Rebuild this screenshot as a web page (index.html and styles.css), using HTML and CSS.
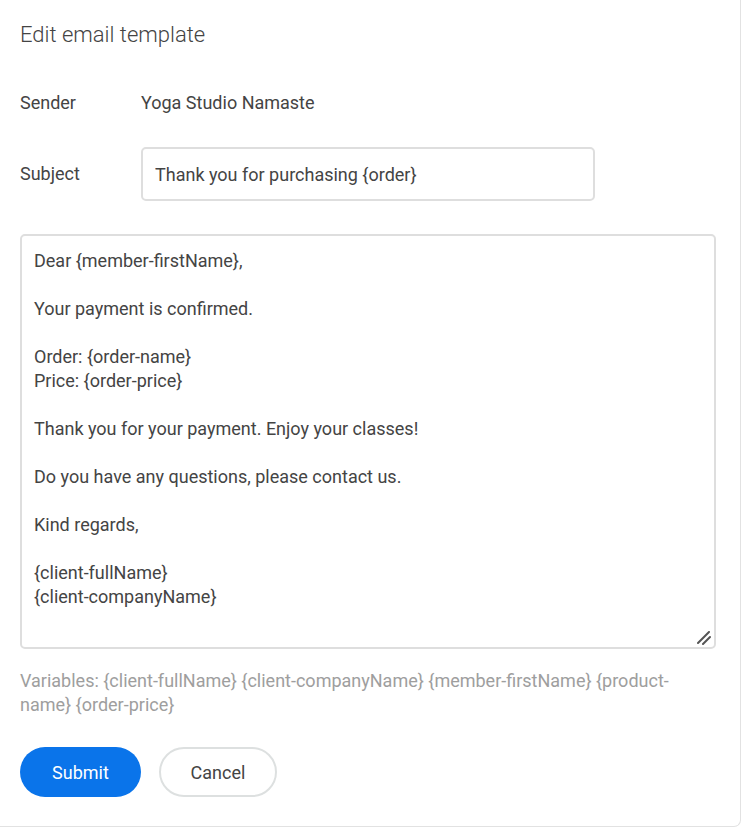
FILE: index.html
```html
<!DOCTYPE html>
<html>
<head>
    <meta charset="UTF-8">
    <title>Edit email template</title>
    <link rel="stylesheet" href="styles.css">
</head>
<body>
<div class="card">
    <h2 class="title">Edit email template</h2>

    <div class="row sender-row">
        <div class="label">Sender</div>
        <div class="value">Yoga Studio Namaste</div>
    </div>

    <div class="row subject-row">
        <label class="label" for="subject">Subject</label>
        <input id="subject" class="subject-input" type="text" value="Thank you for purchasing {order}">
    </div>

    <div class="body-wrap">
        <textarea class="body-input">Dear {member-firstName},

Your payment is confirmed.

Order: {order-name}
Price: {order-price}

Thank you for your payment. Enjoy your classes!

Do you have any questions, please contact us.

Kind regards,

{client-fullName}
{client-companyName}</textarea>
        <svg class="grip" width="14" height="14" viewBox="0 0 14 14">
            <path d="M1 12 L12 1 M6 13 L13 6" stroke="#555" stroke-width="2" stroke-linecap="round" fill="none"/>
        </svg>
    </div>

    <p class="variables">Variables: {client-fullName} {client-companyName} {member-firstName} {product-name} {order-price}</p>

    <div class="actions">
        <button class="btn btn-primary">Submit</button>
        <button class="btn btn-secondary">Cancel</button>
    </div>
</div>
</body>
</html>
```

FILE: styles.css
```css
body {
    margin: 0;
    font-family: Roboto, "Liberation Sans", Arial, sans-serif;
    background-color: #fff;
    color: #444;
}
.card {
    box-sizing: border-box;
    width: 741px;
    height: 827px;
    padding: 20px 0 0 20px;
    background: white;
    border-right: 1px solid #e2e2e2;
    border-bottom: 1px solid #e2e2e2;
    border-bottom-right-radius: 7px;
}
.title {
    margin: 0 0 41px;
    font-size: 22px;
    font-weight: 300;
    line-height: 30px;
    color: #444;
}
.row {
    display: flex;
    align-items: center;
}
.label {
    width: 121px;
    font-size: 18px;
    line-height: 24px;
}
.value {
    font-size: 18px;
    line-height: 24px;
}
.sender-row {
    margin-bottom: 32px;
}
.subject-row {
    margin-bottom: 33px;
}
.subject-input {
    box-sizing: border-box;
    width: 454px;
    height: 54px;
    padding: 0 12px;
    border: 2px solid #dedede;
    border-radius: 5px;
    font-family: inherit;
    font-size: 18px;
    color: #444;
    outline: none;
}
.body-wrap {
    position: relative;
    width: 696px;
}
.body-input {
    display: block;
    box-sizing: border-box;
    width: 696px;
    height: 415px;
    margin: 0;
    padding: 13px 12px;
    border: 2px solid #dedede;
    border-radius: 5px;
    font-family: inherit;
    font-size: 18px;
    line-height: 24px;
    color: #444;
    outline: none;
    resize: none;
}
.grip {
    position: absolute;
    right: 5px;
    bottom: 4px;
}
.variables {
    width: 696px;
    margin: 20px 0 30px;
    font-size: 18px;
    line-height: 24px;
    color: #9e9e9e;
}
.actions {
    display: flex;
    gap: 18px;
}
.btn {
    box-sizing: border-box;
    height: 50px;
    border-radius: 25px;
    font-family: inherit;
    font-size: 18px;
    cursor: pointer;
}
.btn-primary {
    width: 121px;
    background-color: #0a74ea;
    border: none;
    color: white;
}
.btn-secondary {
    width: 118px;
    background-color: white;
    border: 2px solid #dde0e0;
    color: #444;
}
```
